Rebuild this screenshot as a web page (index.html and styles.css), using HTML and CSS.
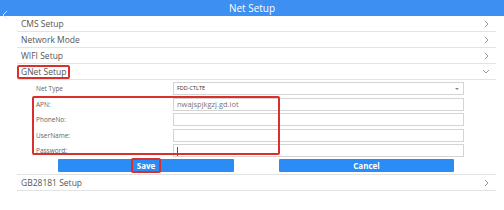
FILE: index.html
```html
<!DOCTYPE html>
<html lang="en">
<head>
  <meta charset="UTF-8">
  <title>Net Setup</title>
  <link rel="stylesheet" href="styles.css">
</head>
<body>
  <header class="topbar">
    <span class="back">
      <svg width="6" height="10" viewBox="0 0 6 10"><polyline points="5,1 1,5 5,9" fill="none" stroke="#cfe2fb" stroke-width="1"/></svg>
    </span>
    <div class="title">Net Setup</div>
  </header>

  <div class="menu">
    <div class="item"><span>CMS Setup</span><svg class="chev" width="6" height="8" viewBox="0 0 6 8"><polyline points="1,1 4,4 1,7" fill="none" stroke="#999" stroke-width="1"/></svg></div>
    <div class="item"><span>Network Mode</span><svg class="chev" width="6" height="8" viewBox="0 0 6 8"><polyline points="1,1 4,4 1,7" fill="none" stroke="#999" stroke-width="1"/></svg></div>
    <div class="item"><span>WIFI Setup</span><svg class="chev" width="6" height="8" viewBox="0 0 6 8"><polyline points="1,1 4,4 1,7" fill="none" stroke="#999" stroke-width="1"/></svg></div>
    <div class="item open"><span class="mark">GNet Setup</span><svg class="chev" width="8" height="6" viewBox="0 0 8 6"><polyline points="1,1 4,4 7,1" fill="none" stroke="#999" stroke-width="1"/></svg></div>

    <div class="panel">
      <div class="form">
        <div class="row">
          <label>Net Type</label>
          <div class="field select">FDD-CTLTE<span class="caret"></span></div>
        </div>
        <div class="row">
          <label>APN:</label>
          <div class="field">nwajspjkgzj.gd.iot</div>
        </div>
        <div class="row">
          <label>PhoneNo:</label>
          <div class="field"></div>
        </div>
        <div class="row">
          <label>UserName:</label>
          <div class="field"></div>
        </div>
        <div class="row">
          <label>Password:</label>
          <div class="field"><span class="cursor"></span></div>
        </div>
        <div class="annot"></div>
      </div>
      <div class="buttons">
        <button class="btn save"><span class="mark">Save</span></button>
        <button class="btn cancel">Cancel</button>
      </div>
    </div>

    <div class="item"><span>GB28181 Setup</span><svg class="chev" width="6" height="8" viewBox="0 0 6 8"><polyline points="1,1 4,4 1,7" fill="none" stroke="#999" stroke-width="1"/></svg></div>
  </div>
</body>
</html>
```

FILE: styles.css
```css
* {
  box-sizing: border-box;
}
body {
  margin: 0;
  background: #fff;
  font-family: "Open Sans", "Liberation Sans", sans-serif;
  color: #555;
}
.topbar {
  height: 16px;
  background: #3d8ff1;
  display: flex;
  align-items: center;
  justify-content: center;
  position: relative;
}
.topbar .back {
  position: absolute;
  left: 2px;
  top: 3px;
}
.topbar .title {
  color: #fff;
  font-size: 10px;
}
.menu {
  margin: 0 8px 0 17px;
}
.item {
  height: 16px;
  border-bottom: 1px solid #e3e3e3;
  display: flex;
  align-items: center;
  justify-content: space-between;
  padding: 0 6px 0 4px;
  font-size: 8.5px;
}
.item.open {
  padding-left: 0;
}
.item .mark {
  border: 2px solid #d9302c;
  border-radius: 2px;
  padding: 0 2px;
  line-height: 10px;
}
.panel {
  border-bottom: 1px solid #e3e3e3;
  padding-bottom: 2px;
}
.form {
  position: relative;
  padding-top: 1px;
}
.row {
  display: flex;
  align-items: center;
  height: 15.5px;
}
.row label {
  width: 156px;
  padding-left: 19px;
  font-size: 6.5px;
  color: #666;
}
.field {
  width: 291px;
  height: 13px;
  border: 1px solid #d4d4d4;
  font-size: 7.5px;
  color: #777;
  line-height: 11px;
  padding-left: 3px;
  position: relative;
}
.field.select {
  font-size: 5.5px;
  color: #333;
}
.caret {
  position: absolute;
  right: 4px;
  top: 5px;
  border-left: 2px solid transparent;
  border-right: 2px solid transparent;
  border-top: 2px solid #888;
}
.cursor {
  display: inline-block;
  width: 1px;
  height: 9px;
  background: #555;
  vertical-align: middle;
}
.annot {
  position: absolute;
  left: 15px;
  top: 15.5px;
  width: 248px;
  height: 59px;
  border: 2px solid #d9302c;
  border-radius: 2px;
}
.buttons {
  display: flex;
  gap: 45px;
  padding-left: 41px;
  margin-top: 0.5px;
}
.btn {
  border: none;
  background: #2b8cf5;
  color: #fff;
  font-family: inherit;
  font-weight: bold;
  font-size: 8px;
  height: 13px;
  padding: 0;
  border-radius: 1px;
  display: flex;
  align-items: center;
  justify-content: center;
}
.btn.save {
  width: 176px;
}
.btn.cancel {
  width: 175px;
}
.btn .mark {
  border: 2px solid #d9302c;
  border-radius: 2px;
  padding: 0 4px;
  line-height: 11px;
}
```
